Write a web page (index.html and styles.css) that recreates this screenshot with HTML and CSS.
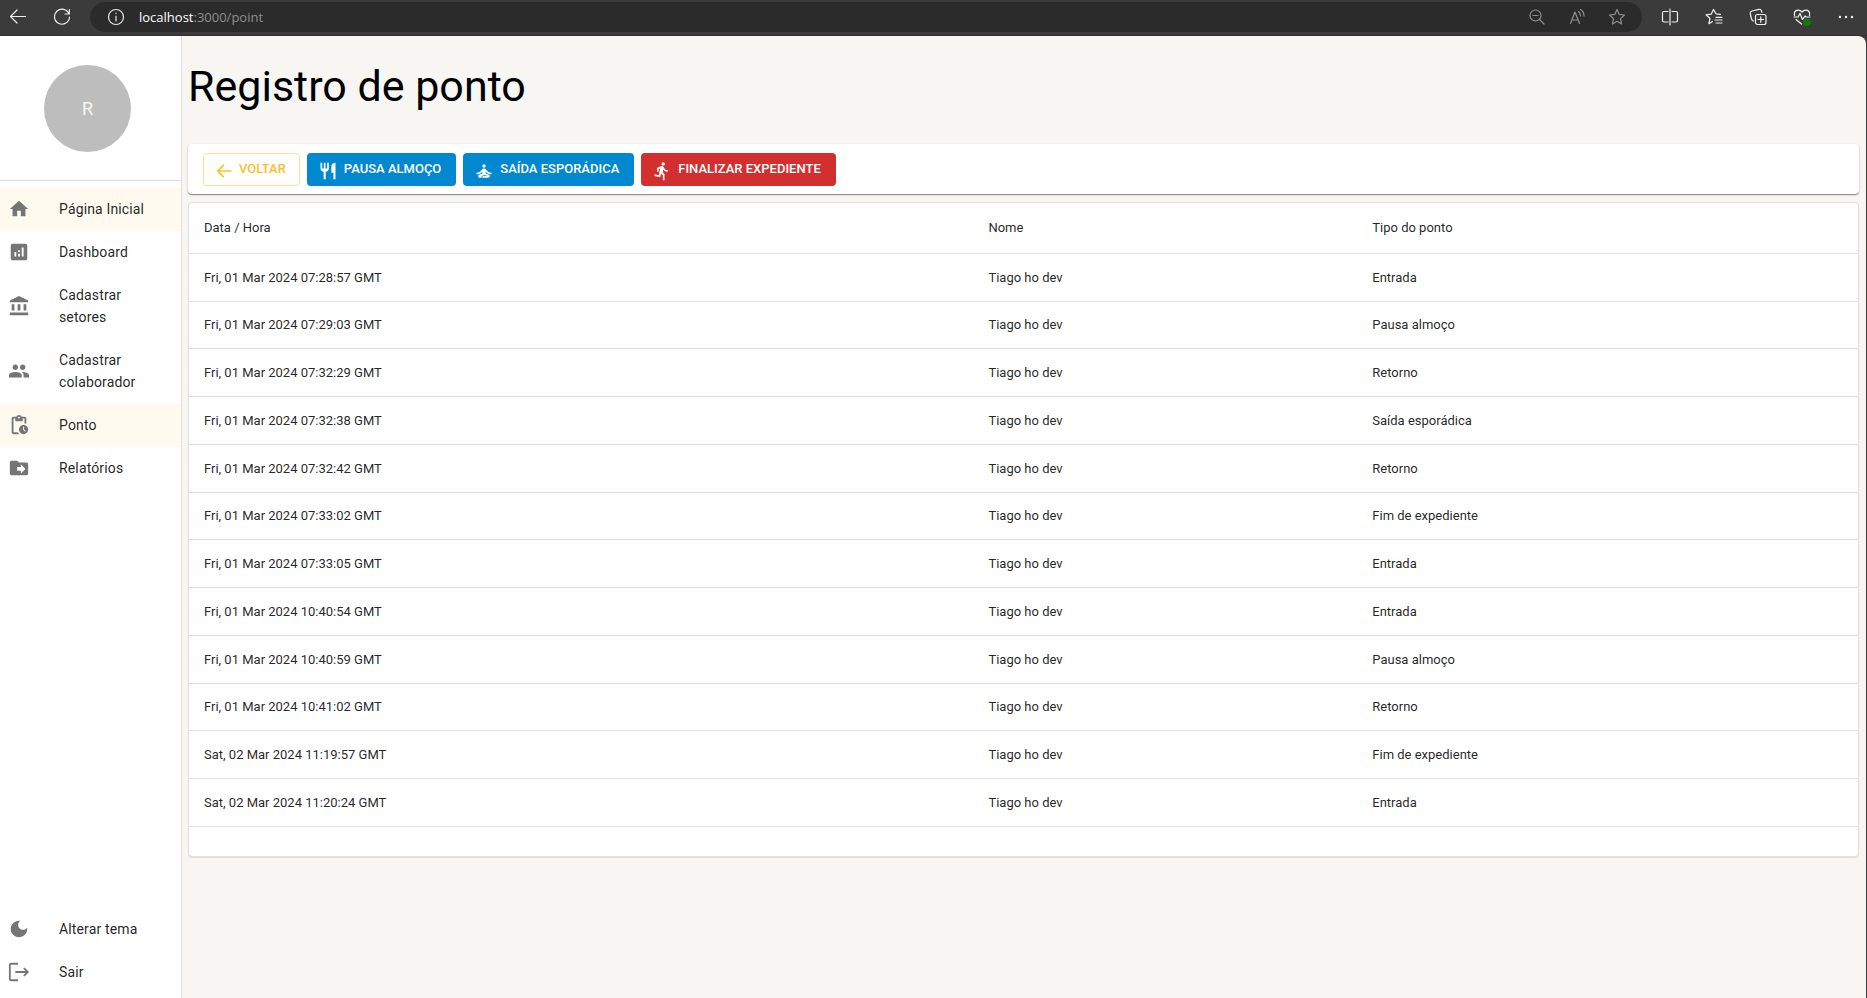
FILE: index.html
```html
<!DOCTYPE html>
<html lang="pt-BR">
<head>
<meta charset="utf-8">
<title>Registro de ponto</title>
<link rel="stylesheet" href="styles.css">
</head>
<body>
<header class="browser">
  <button class="tool" aria-label="Voltar"><svg viewBox="0 0 18 18"><path d="M16.500 8.500H1.500M8 2L1.500 8.500 8 15"/></svg></button>
  <button class="tool" aria-label="Recarregar"><svg viewBox="0 0 18 18"><path d="M16 6A7.500 7.500 0 1 0 16.500 9M16.300 1.500V6H12"/></svg></button>
  <div class="address">
    <svg class="info" viewBox="0 0 18 18"><circle cx="9" cy="9" r="7.500"/><path d="M9 8v5M9 5v.5"/></svg>
    <p class="url"><span class="host">localhost</span>:3000/point</p>
    <button class="tool dim" aria-label="Zoom"><svg viewBox="0 0 18 18"><circle cx="7.500" cy="7.500" r="5.500"/><path d="M11.500 11.500L16 16M5 7.500h5"/></svg></button>
    <button class="tool dim" aria-label="Ler em voz alta"><svg viewBox="0 0 18 18"><path d="M2.500 15.500L7 4l4.500 11.500M4 12h6M10.500 3.500q2 1.500 2 4.500M12.500 1.500q3.500 2 3.500 6.500"/></svg></button>
    <button class="tool dim" aria-label="Favoritar"><svg viewBox="0 0 18 18"><path d="M9 1.500l2.200 4.900 5.300.6-4 3.600 1.100 5.400L9 13.300 4.400 16l1.100-5.400-4-3.600 5.300-.6z"/></svg></button>
  </div>
  <button class="tool" aria-label="Dividir tela"><svg viewBox="0 0 18 18"><path d="M7 3.500H3Q1.500 3.500 1.500 5v7.500Q1.500 14 3 14h4M11 3.500h4q1.500 0 1.500 1.500v7.500q0 1.500-1.500 1.500h-4M9 1v16"/></svg></button>
  <button class="tool" aria-label="Favoritos"><svg viewBox="0 0 18 18"><path d="M15.500 6.300l-4.500-.5L8.500 1.500 6.200 6.200l-5.200.6 3.900 3.500-1 5.400L7.500 13.500M11 9.300h6M10 12h7M11 15h6"/></svg></button>
  <button class="tool" aria-label="Coleções"><svg viewBox="0 0 18 18"><rect x="6.500" y="6.500" width="10.500" height="10" rx="2"/><path d="M11.800 8.800v5.500M9 11.500h5.500M4.500 13Q3 12.500 2.500 11L1.200 5.500Q1 3.500 3 3l7-1.700Q12 1 12.500 3l.3 1.500"/></svg></button>
  <button class="tool" aria-label="Desempenho"><svg viewBox="0 0 18 18"><path d="M1.500 7.500C.5 2 6 .5 9 4c3-3.500 8.500-2 7.500 3.500M1 9h4l2-3.500 2.500 6L12 8l1 1h4M3 11.500L8.500 16"/><circle class="ok" cx="14" cy="14.200" r="3.800"/></svg></button>
  <button class="tool" aria-label="Mais"><svg viewBox="0 0 18 18"><path class="dots" d="M3 9h.01M9 9h.01M15 9h.01"/></svg></button>
</header>
<div class="app">
  <aside class="sidebar">
    <div class="profile"><div class="avatar">R</div></div>
    <nav class="menu">
      <a class="item active" href="#"><svg viewBox="0 0 24 24"><path d="M10 20v-6h4v6h5v-8h3L12 3 2 12h3v8z"/></svg><span>Página Inicial</span></a>
      <a class="item" href="#"><svg viewBox="0 0 24 24"><path d="M19 3H5c-1.100 0-2 .9-2 2v14c0 1.100.9 2 2 2h14c1.100 0 2-.9 2-2V5c0-1.100-.9-2-2-2zM9 17H7v-5h2v5zm4 0h-2v-3h2v3zm0-5h-2v-2h2v2zm4 5h-2V7h2v10z"/></svg><span>Dashboard</span></a>
      <a class="item" href="#"><svg viewBox="0 0 24 24"><path d="M4 10h3v7H4zM10.500 10h3v7h-3zM2 19h20v3H2zM17 10h3v7h-3zM12 1L2 6v2h20V6z"/></svg><span>Cadastrar setores</span></a>
      <a class="item" href="#"><svg viewBox="0 0 24 24"><path d="M16 11c1.660 0 2.990-1.340 2.990-3S17.660 5 16 5s-3 1.340-3 3 1.340 3 3 3zm-8 0c1.660 0 2.990-1.340 2.990-3S9.660 5 8 5 5 6.340 5 8s1.340 3 3 3zm0 2c-2.330 0-7 1.170-7 3.500V19h14v-2.500c0-2.330-4.670-3.500-7-3.500zm8 0c-.29 0-.62.020-.97.050 1.160.84 1.970 1.970 1.970 3.450V19h6v-2.500c0-2.330-4.670-3.500-7-3.500z"/></svg><span>Cadastrar colaborador</span></a>
      <a class="item active" href="#"><svg viewBox="0 0 24 24"><path d="M17 12c-2.760 0-5 2.240-5 5s2.240 5 5 5 5-2.240 5-5-2.240-5-5-5zm1.650 7.350L16.500 17.200V14h1v2.790l1.850 1.850-.7.710zM18 3h-3.180C14.400 1.840 13.300 1 12 1s-2.400.84-2.820 2H6c-1.100 0-2 .9-2 2v15c0 1.100.9 2 2 2h6.110c-.59-.57-1.070-1.250-1.420-2H6V5h2v3h8V5h2v5.080c.71.100 1.380.310 2 .6V5c0-1.100-.9-2-2-2zm-6 2c-.55 0-1-.45-1-1s.45-1 1-1 1 .45 1 1-.45 1-1 1z"/></svg><span>Ponto</span></a>
      <a class="item" href="#"><svg viewBox="0 0 24 24"><path d="M20 6h-8l-2-2H4c-1.100 0-2 .9-2 2v12c0 1.100.9 2 2 2h16c1.100 0 2-.9 2-2V8c0-1.100-.9-2-2-2zm-6 12v-3h-4v-4h4V8l5 5-5 5z"/></svg><span>Relatórios</span></a>
    </nav>
    <nav class="menu menu-bottom">
      <a class="item" href="#"><svg viewBox="0 0 24 24"><path d="M12 3c-4.970 0-9 4.030-9 9s4.030 9 9 9 9-4.030 9-9c0-.46-.04-.92-.1-1.360-.98 1.370-2.580 2.260-4.400 2.260-2.980 0-5.400-2.420-5.400-5.400 0-1.810.89-3.420 2.260-4.400-.44-.06-.9-.1-1.360-.1z"/></svg><span>Alterar tema</span></a>
      <a class="item" href="#"><svg viewBox="0 0 24 24"><path d="M3.500 2H11v2H3v16h8v2H3.500Q1 22 1 19.500v-15Q1 2 3.500 2zM18 7l5 5-5 5-1.400-1.400 2.600-2.600H8v-2h11.200l-2.600-2.600z"/></svg><span>Sair</span></a>
    </nav>
  </aside>
  <main class="content">
    <h1 class="title">Registro de ponto</h1>
    <div class="toolbar">
      <button class="btn btn-outline"><svg viewBox="0 0 24 24"><path d="M21 11H6.830l5.580-5.590L11 4l-8 8 8 8 1.410-1.410L6.830 13H21z"/></svg>VOLTAR</button>
      <button class="btn btn-info"><svg viewBox="0 0 24 24"><path d="M11 9H9V2H7v7H5V2H3v7c0 2.120 1.660 3.840 3.750 3.970V22h2.500v-9.030C11.340 12.840 13 11.120 13 9V2h-2v7zm5-3v8h2.500v8H21V2c-2.760 0-5 2.240-5 4z"/></svg>PAUSA ALMOÇO</button>
      <button class="btn btn-info"><svg viewBox="0 0 24 24"><circle cx="12" cy="6" r="2"/><path d="M21 16v-2c-2.240 0-4.160-.96-5.600-2.680l-1.340-1.600A1.980 1.980 0 0 0 12.530 9h-1.050c-.59 0-1.150.26-1.530.72l-1.340 1.600C7.160 13.040 5.240 14 3 14v2c2.770 0 5.190-1.170 7-3.250V15l-3.880 1.550c-.67.270-1.120.93-1.120 1.660C5 19.200 5.800 20 6.790 20H9v-.5a2.500 2.500 0 0 1 2.500-2.500h3c.28 0 .5.220.5.500s-.22.500-.5.500h-3c-.83 0-1.500.67-1.500 1.500v.5h7.100c.85 0 1.650-.55 1.850-1.380.21-.89-.25-1.740-1.050-2.060L14 15v-2.250c1.810 2.080 4.230 3.250 7 3.250z"/></svg>SAÍDA ESPORÁDICA</button>
      <button class="btn btn-danger"><svg viewBox="0 0 24 24"><path d="M13.490 5.480c1.100 0 2-.9 2-2s-.9-2-2-2-2 .9-2 2 .9 2 2 2zm-3.600 13.900l1-4.400 2.100 2v6h2v-7.500l-2.100-2 .6-3c1.300 1.500 3.300 2.500 5.500 2.500v-2c-1.900 0-3.500-1-4.300-2.400l-1-1.600c-.4-.6-1-1-1.700-1-.3 0-.5.100-.8.100l-5.200 2.200v4.700h2v-3.400l1.800-.7-1.600 8.100-4.900-1-.4 2 7 1.400z"/></svg>FINALIZAR EXPEDIENTE</button>
    </div>
    <div class="card">
      <table class="records">
        <thead><tr><th class="col-date">Data / Hora</th><th class="col-name">Nome</th><th>Tipo do ponto</th></tr></thead>
        <tbody>
          <tr><td>Fri, 01 Mar 2024 07:28:57 GMT</td><td>Tiago ho dev</td><td>Entrada</td></tr>
          <tr><td>Fri, 01 Mar 2024 07:29:03 GMT</td><td>Tiago ho dev</td><td>Pausa almoço</td></tr>
          <tr><td>Fri, 01 Mar 2024 07:32:29 GMT</td><td>Tiago ho dev</td><td>Retorno</td></tr>
          <tr><td>Fri, 01 Mar 2024 07:32:38 GMT</td><td>Tiago ho dev</td><td>Saída esporádica</td></tr>
          <tr><td>Fri, 01 Mar 2024 07:32:42 GMT</td><td>Tiago ho dev</td><td>Retorno</td></tr>
          <tr><td>Fri, 01 Mar 2024 07:33:02 GMT</td><td>Tiago ho dev</td><td>Fim de expediente</td></tr>
          <tr><td>Fri, 01 Mar 2024 07:33:05 GMT</td><td>Tiago ho dev</td><td>Entrada</td></tr>
          <tr><td>Fri, 01 Mar 2024 10:40:54 GMT</td><td>Tiago ho dev</td><td>Entrada</td></tr>
          <tr><td>Fri, 01 Mar 2024 10:40:59 GMT</td><td>Tiago ho dev</td><td>Pausa almoço</td></tr>
          <tr><td>Fri, 01 Mar 2024 10:41:02 GMT</td><td>Tiago ho dev</td><td>Retorno</td></tr>
          <tr><td>Sat, 02 Mar 2024 11:19:57 GMT</td><td>Tiago ho dev</td><td>Fim de expediente</td></tr>
          <tr><td>Sat, 02 Mar 2024 11:20:24 GMT</td><td>Tiago ho dev</td><td>Entrada</td></tr>
        </tbody>
      </table>
    </div>
  </main>
</div>
</body>
</html>
```
FILE: styles.css
```css
* { box-sizing: border-box; }

body {
  margin: 0;
  min-height: 100vh;
  display: flex;
  flex-direction: column;
  background: #3b3b3b;
  color: rgba(0, 0, 0, 0.87);
  font-family: Roboto, sans-serif;
}

button { font: inherit; cursor: pointer; }

/* Browser bar */
.browser {
  display: flex;
  align-items: center;
  gap: 26px;
  height: 36px;
  padding: 0 12px 1px 9px;
  border-bottom: 1px solid #2f2f2f;
}
.tool {
  display: flex;
  flex: none;
  padding: 0;
  border: 0;
  background: none;
  color: #f0f0f0;
}
.tool svg, .info {
  width: 18px;
  height: 18px;
  fill: none;
  stroke: currentColor;
  stroke-width: 1.2;
  stroke-linecap: round;
  stroke-linejoin: round;
}
.tool.dim { color: #8f8f8f; }
.tool .dots { stroke-width: 2.4; }
.tool .ok { fill: #0f7b0f; stroke: none; }
.address {
  display: flex;
  flex: 1;
  align-items: center;
  gap: 22px;
  height: 30px;
  margin: 0 -7px;
  padding: 0 16px 0 17px;
  border-radius: 15px;
  background: #2b2b2b;
  color: #e8e8e8;
}
.url {
  flex: 1;
  margin: 0 0 0 -8px;
  color: #8f8f8f;
  font: 13px/20px "Open Sans", sans-serif;
}
.host { color: #fff; }

/* Page shell */
.app {
  display: flex;
  flex: 1;
  margin-right: 1px;
  overflow: hidden;
  border-top-right-radius: 8px;
  background: #f7f6f2;
}
.sidebar {
  display: flex;
  flex: none;
  flex-direction: column;
  width: 182px;
  padding-bottom: 4px;
  border-right: 1px solid #e0e0e0;
  background: #fff;
}
.profile {
  padding: 29px 44px 28px;
  border-bottom: 1px solid #e0e0e0;
}
.avatar {
  display: flex;
  align-items: center;
  justify-content: center;
  width: 87px;
  height: 87px;
  border-radius: 50%;
  background: #bdbdbd;
  color: #f7f6f2;
  font-size: 18px;
}
.menu { padding-top: 7px; }
.menu-bottom { margin-top: auto; }
.item {
  display: flex;
  align-items: center;
  gap: 29px;
  padding: 10px 14px 11px 8px;
  color: inherit;
  font-size: 14px;
  line-height: 22px;
  letter-spacing: 0.01em;
  text-decoration: none;
}
.item.active { background: #fffaef; }
.item svg {
  flex: none;
  width: 22px;
  height: 22px;
  fill: #757575;
}

/* Content */
.content {
  flex: 1;
  padding: 0 7px 24px 6px;
}
.title {
  margin: 25px 0 33px;
  color: #000;
  font-size: 43px;
  font-weight: 400;
  line-height: 50px;
}
.toolbar {
  display: flex;
  flex-wrap: wrap;
  gap: 7px;
  margin-bottom: 8px;
  padding: 9px 15px 8px;
  border-radius: 4px;
  background: #fff;
  box-shadow: 0 1px 1px rgba(0, 0, 0, 0.4), 0 1px 3px rgba(0, 0, 0, 0.12);
}
.btn {
  display: flex;
  align-items: center;
  gap: 6px;
  height: 33px;
  padding: 0 15px 2px 11px;
  border: 0;
  border-radius: 4px;
  color: #fff;
  font-size: 13px;
  font-weight: 500;
}
.btn svg {
  width: 20px;
  height: 20px;
  margin-top: 4px;
  fill: currentColor;
}
.btn-outline {
  gap: 5px;
  padding: 0 13px 2px 10px;
  border: 1px solid #fddf98;
  background: #fff;
  color: #fbc02d;
}
.btn-info { background: #0288d1; }
.btn-danger { background: #d32f2f; }

.card {
  padding-bottom: 29px;
  border: 1px solid #e0e0e0;
  border-radius: 4px;
  background: #fff;
  box-shadow: 0 1px 1px rgba(0, 0, 0, 0.1);
}
.records {
  width: 100%;
  border-collapse: separate;
  border-spacing: 0;
  table-layout: fixed;
  font-size: 13px;
  line-height: 18px;
  text-align: left;
}
.records th, .records td {
  height: 48px;
  padding: 0 15px;
  border-bottom: 1px solid #e0e0e0;
  font-weight: 400;
}
.records th { height: 51px; }
.records tr:nth-child(4n + 2) td { height: 47px; }
.col-date { width: 47%; }
.col-name { width: 23%; }
```
